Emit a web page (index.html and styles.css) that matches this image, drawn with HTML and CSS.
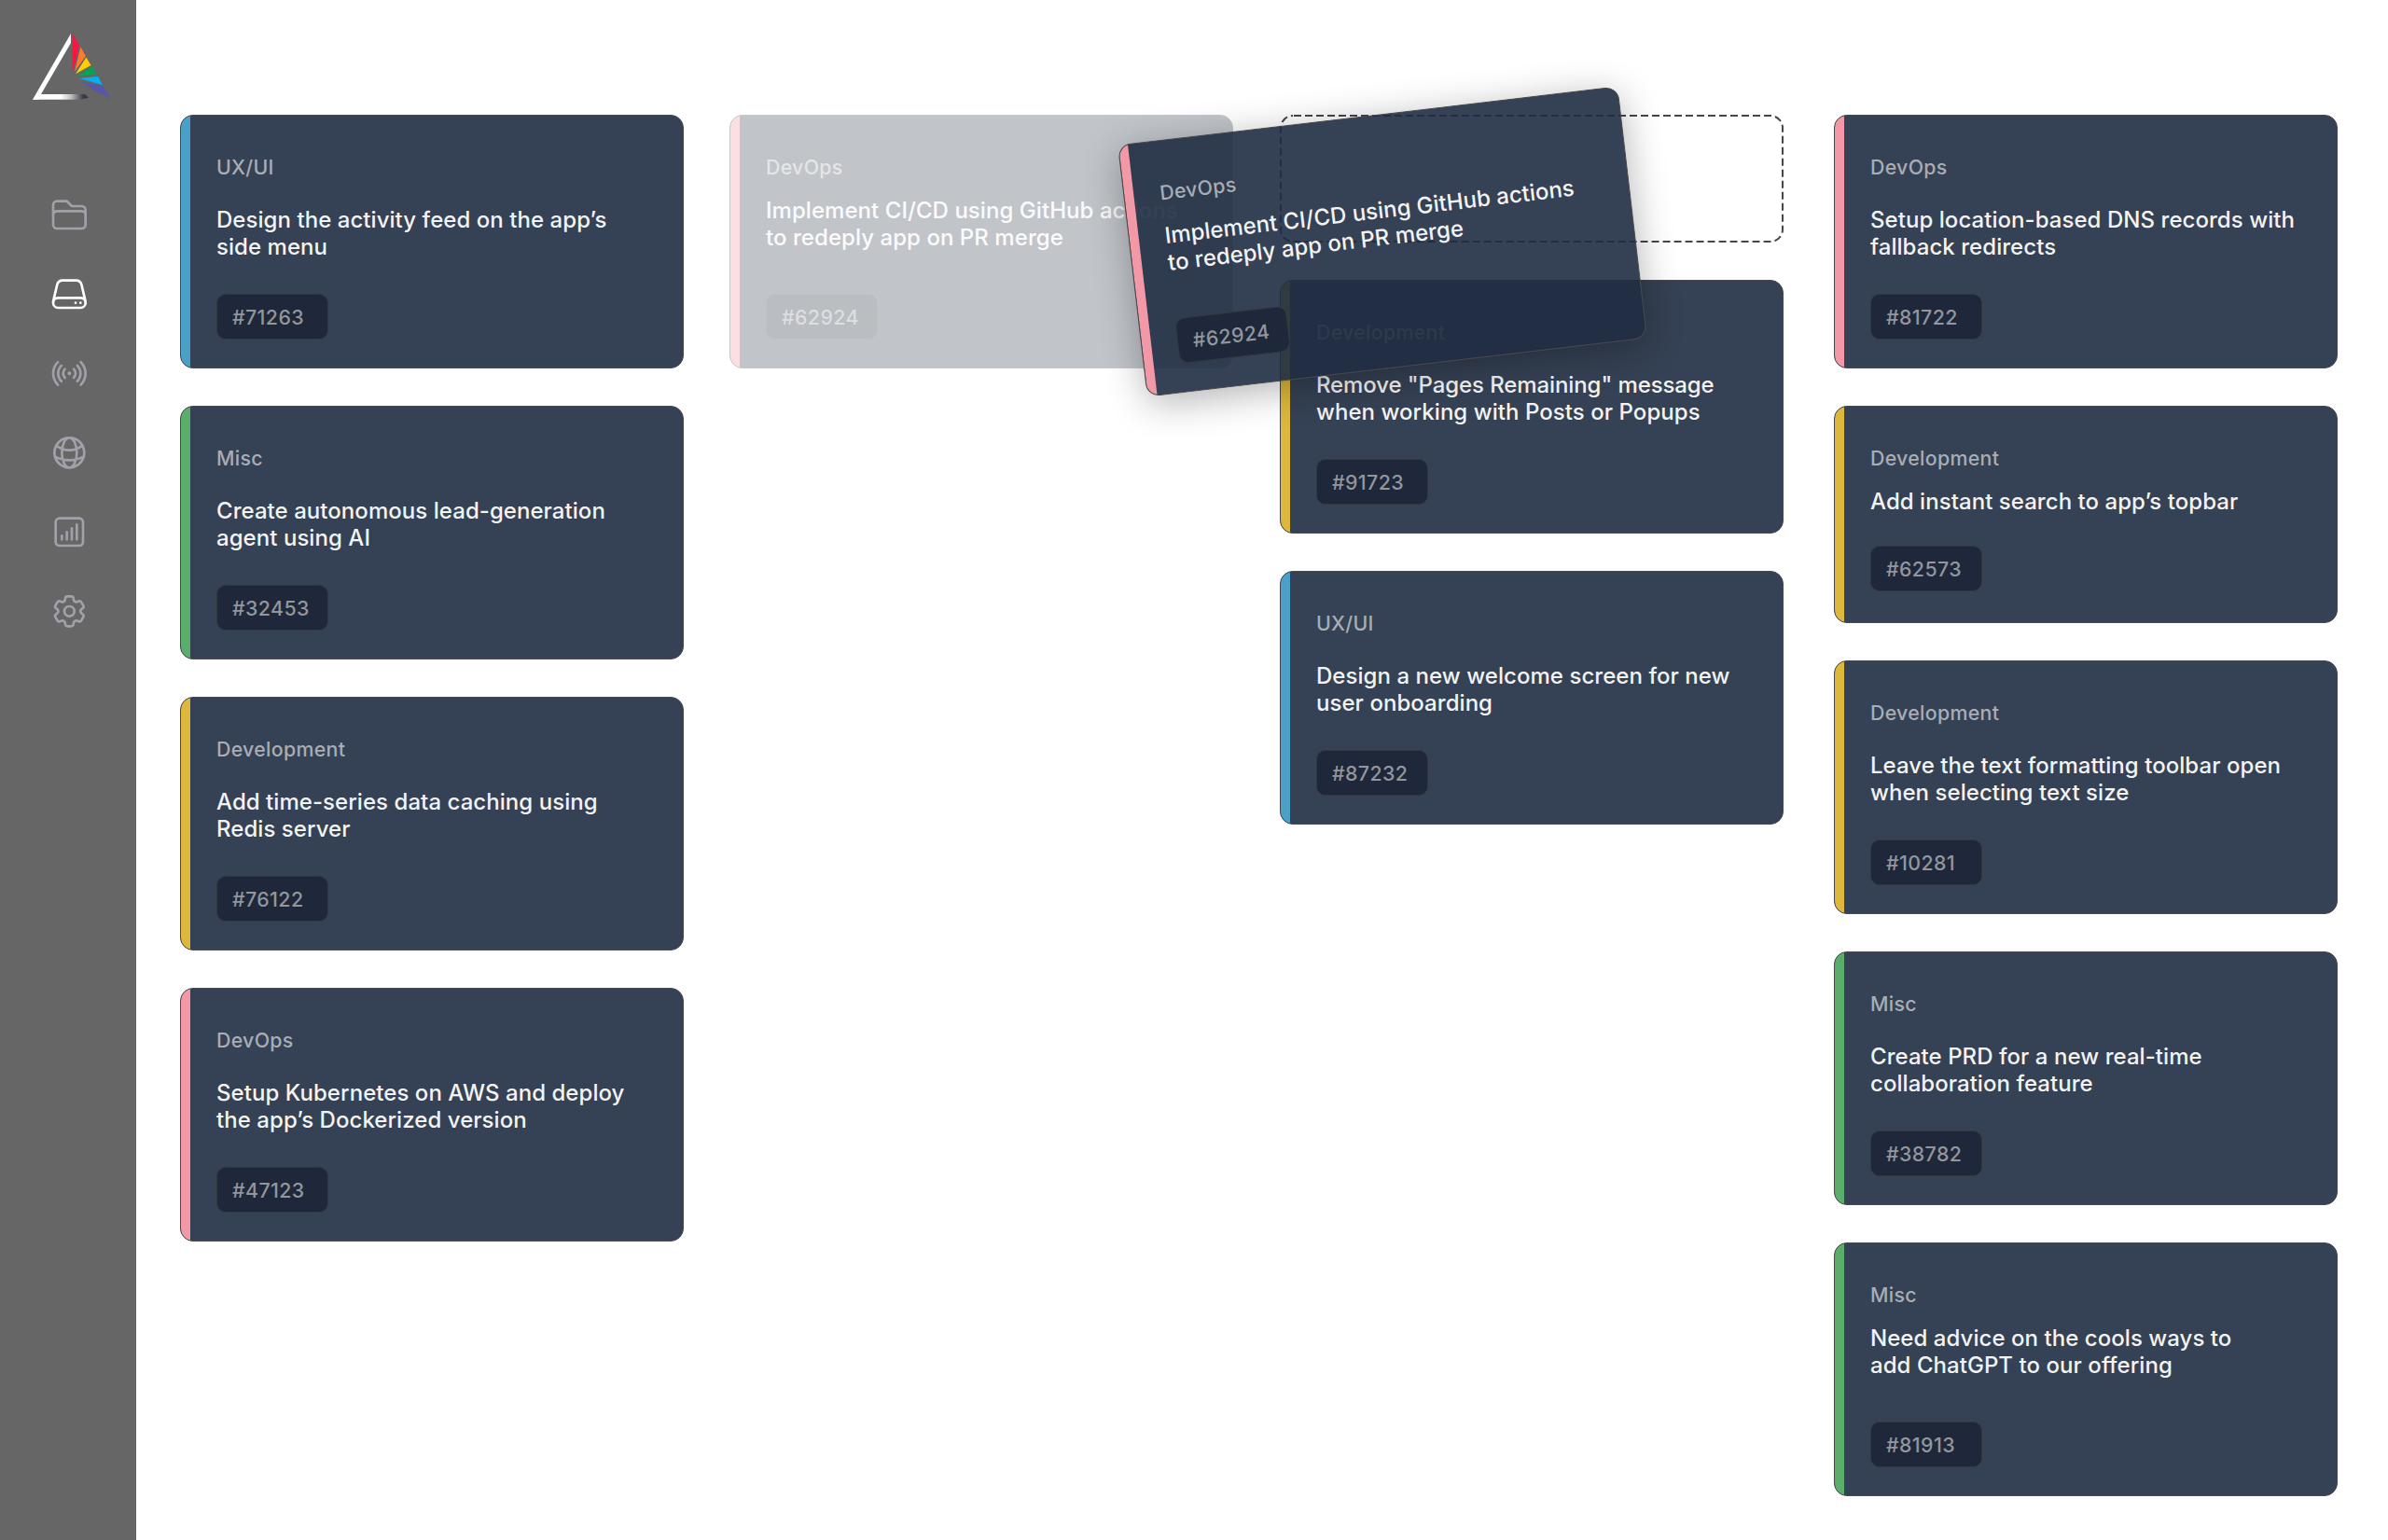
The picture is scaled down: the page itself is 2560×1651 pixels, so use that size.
FILE: index.html
```html
<!DOCTYPE html>
<html lang="en">
<head>
<meta charset="utf-8">
<title>Task board</title>
<link rel="stylesheet" href="styles.css">
</head>
<body>
<div class="app">
  <aside class="sidebar">
    <svg class="logo" viewBox="34 34 88 75" aria-hidden="true">
      <defs>
        <linearGradient id="base" gradientUnits="userSpaceOnUse" x1="35" y1="0" x2="95" y2="0">
          <stop offset="0.5" stop-color="#fff"/>
          <stop offset="0.68" stop-color="#c4c4c8"/>
          <stop offset="0.9" stop-color="#3c3c44"/>
          <stop offset="1" stop-color="#2f3a44"/>
        </linearGradient>
      </defs>
      <path fill="#fff" d="M76 36V46L44 101L41 106.7H35Z"/>
      <path fill="url(#base)" d="M42 101H91L95 104.7L94 105L86 106.7H35Z"/>
      <path fill="#f5173f" d="M77.7 36L85 48.5L79 74.5L77.7 74Z"/>
      <path fill="#ff7a30" d="M86.4 50.3L91.8 60L80 76.7Z"/>
      <path fill="#ffcf00" d="M92.4 61.5L97.5 70L81 79.3Z"/>
      <path fill="#00a651" d="M98.6 71.4L103.8 80L83.3 81Z"/>
      <path fill="#00b3f0" d="M105 82L109.8 91L85 84Z"/>
      <path fill="#5756a8" d="M87 87.6L110.4 92L118.8 106.3L101 97Z"/>
    </svg>
    <nav class="nav">
      <svg class="icon" viewBox="0 0 24 24"><path d="M2.25 12.75V12A2.25 2.25 0 014.5 9.75h15A2.25 2.25 0 0121.75 12v.75m-8.69-6.44l-2.12-2.12a1.5 1.5 0 00-1.061-.44H4.5A2.25 2.25 0 002.25 6v12a2.25 2.25 0 002.25 2.25h15A2.25 2.25 0 0021.75 18V9a2.25 2.25 0 00-2.25-2.25h-5.379a1.5 1.5 0 01-1.06-.44z"/></svg>
      <svg class="icon active" viewBox="0 0 24 24"><path d="M21.75 17.25v-.228a4.5 4.5 0 00-.12-1.03l-2.268-9.64a3.375 3.375 0 00-3.285-2.602H7.923a3.375 3.375 0 00-3.285 2.602l-2.268 9.64a4.5 4.5 0 00-.12 1.03v.228m19.5 0a3 3 0 01-3 3H5.25a3 3 0 01-3-3m19.5 0a3 3 0 00-3-3H5.25a3 3 0 00-3 3m16.5 0h.008v.008h-.008v-.008zm-3 0h.008v.008h-.008v-.008z"/></svg>
      <svg class="icon" viewBox="0 0 24 24"><path d="M9.348 14.651a3.75 3.75 0 010-5.303m5.304 0a3.75 3.75 0 010 5.303m-7.425 2.122a6.75 6.75 0 010-9.546m9.546 0a6.75 6.75 0 010 9.546M5.106 18.894c-3.808-3.808-3.808-9.98 0-13.789m13.788 0c3.808 3.808 3.808 9.981 0 13.79M12 12h.008v.007H12V12zm.375 0a.375.375 0 11-.75 0 .375.375 0 01.75 0z"/></svg>
      <svg class="icon" viewBox="0 0 24 24"><path d="M12 21a9.004 9.004 0 008.716-6.747M12 21a9.004 9.004 0 01-8.716-6.747M12 21c2.485 0 4.5-4.03 4.5-9S14.485 3 12 3m0 18c-2.485 0-4.5-4.03-4.5-9S9.515 3 12 3m0 0a8.997 8.997 0 017.843 4.582M12 3a8.997 8.997 0 00-7.843 4.582m15.686 0A11.953 11.953 0 0112 10.5c-2.998 0-5.74-1.1-7.843-2.918m15.686 0A8.959 8.959 0 0121 12c0 .778-.099 1.533-.284 2.253m0 0A17.919 17.919 0 0112 16.5c-3.162 0-6.133-.815-8.716-2.247m0 0A9.015 9.015 0 013 12c0-1.605.42-3.113 1.157-4.418"/></svg>
      <svg class="icon" viewBox="0 0 24 24"><path d="M7.5 14.25v2.25m3-4.5v4.5m3-6.75v6.75m3-9v9M6 20.25h12A2.25 2.25 0 0020.25 18V6A2.25 2.25 0 0018 3.75H6A2.25 2.25 0 003.75 6v12A2.25 2.25 0 006 20.25z"/></svg>
      <svg class="icon" viewBox="0 0 24 24"><path d="M9.594 3.94c.09-.542.56-.94 1.11-.94h2.593c.55 0 1.02.398 1.11.94l.213 1.281c.063.374.313.686.645.87.074.04.147.083.22.127.324.196.72.257 1.075.124l1.217-.456a1.125 1.125 0 011.37.49l1.296 2.247a1.125 1.125 0 01-.26 1.431l-1.003.827c-.293.24-.438.613-.431.992a6.759 6.759 0 010 .255c-.007.378.138.75.43.99l1.005.828c.424.35.534.954.26 1.43l-1.298 2.247a1.125 1.125 0 01-1.369.491l-1.217-.456c-.355-.133-.75-.072-1.076.124a6.57 6.57 0 01-.22.128c-.331.183-.581.495-.644.869l-.213 1.28c-.09.543-.56.941-1.11.941h-2.594c-.55 0-1.02-.398-1.11-.94l-.213-1.281c-.062-.374-.312-.686-.644-.87a6.52 6.52 0 01-.22-.127c-.325-.196-.72-.257-1.076-.124l-1.217.456a1.125 1.125 0 01-1.369-.49l-1.297-2.247a1.125 1.125 0 01.26-1.431l1.004-.827c.292-.24.437-.613.43-.992a6.932 6.932 0 010-.255c.007-.378-.138-.75-.43-.99l-1.004-.828a1.125 1.125 0 01-.26-1.43l1.297-2.247a1.125 1.125 0 011.37-.491l1.216.456c.356.133.751.072 1.076-.124.072-.044.146-.087.22-.128.332-.183.582-.495.644-.869l.214-1.281z"/><path d="M15 12a3 3 0 11-6 0 3 3 0 016 0z"/></svg>
    </nav>
  </aside>

  <main class="board">
    <section class="column">
      <article class="card blue"><p class="category">UX/UI</p><h2 class="title">Design the activity feed on the app’s<br>side menu</h2><span class="tag">#71263</span></article>
      <article class="card green"><p class="category">Misc</p><h2 class="title">Create autonomous lead-generation<br>agent using AI</h2><span class="tag">#32453</span></article>
      <article class="card yellow"><p class="category">Development</p><h2 class="title">Add time-series data caching using<br>Redis server</h2><span class="tag">#76122</span></article>
      <article class="card pink"><p class="category">DevOps</p><h2 class="title">Setup Kubernetes on AWS and deploy<br>the app’s Dockerized version</h2><span class="tag">#47123</span></article>
    </section>

    <section class="column">
      <article class="card pink tight ghost"><p class="category">DevOps</p><h2 class="title">Implement CI/CD using GitHub actions<br>to redeply app on PR merge</h2><span class="tag">#62924</span></article>
    </section>

    <section class="column">
      <svg class="dropzone" viewBox="0 0 540 137"><rect x="1" y="1" width="538" height="135" rx="13"/></svg>
      <article class="card yellow"><p class="category">Development</p><h2 class="title"><span class="snug">Remove "Pages Remaining" message</span><br>when working with Posts or Popups</h2><span class="tag">#91723</span></article>
      <article class="card blue"><p class="category">UX/UI</p><h2 class="title">Design a new welcome screen for new<br>user onboarding</h2><span class="tag">#87232</span></article>
    </section>

    <section class="column">
      <article class="card pink"><p class="category">DevOps</p><h2 class="title">Setup location-based DNS records with<br>fallback redirects</h2><span class="tag">#81722</span></article>
      <article class="card yellow tight short"><p class="category">Development</p><h2 class="title">Add instant search to app’s topbar</h2><span class="tag">#62573</span></article>
      <article class="card yellow"><p class="category">Development</p><h2 class="title">Leave the text formatting toolbar open<br>when selecting text size</h2><span class="tag">#10281</span></article>
      <article class="card green"><p class="category">Misc</p><h2 class="title">Create PRD for a new real-time<br>collaboration feature</h2><span class="tag">#38782</span></article>
      <article class="card green tight"><p class="category">Misc</p><h2 class="title">Need advice on the cools ways to<br>add ChatGPT to our offering</h2><span class="tag">#81913</span></article>
    </section>

    <article class="card pink tight dragging"><p class="category">DevOps</p><h2 class="title">Implement CI/CD using GitHub actions<br>to redeply app on PR merge</h2><span class="tag">#62924</span></article>
  </main>
</div>
</body>
</html>
```
FILE: styles.css
```css
* { box-sizing: border-box; }

body {
  margin: 0;
  background: #fff;
  font-family: Inter, "Liberation Sans", sans-serif;
}

.app {
  display: flex;
  height: 1651px;
  overflow: hidden;
}

.sidebar {
  flex: none;
  width: 146px;
  padding-top: 34px;
  background: #666;
  display: flex;
  flex-direction: column;
  align-items: center;
}

.logo {
  width: 88px;
  height: 75px;
  margin-left: 10px;
}

.nav {
  margin-top: 99.5px;
  margin-left: 2px;
  display: flex;
  flex-direction: column;
  gap: 42.5px;
}

.icon {
  display: block;
  width: 42.67px;
  height: 42.67px;
  fill: none;
  stroke: #a1a1aa;
  stroke-width: 1.5;
  stroke-linecap: round;
  stroke-linejoin: round;
}

.icon.active { stroke: #fff; }

.board {
  position: relative;
  display: grid;
  grid-template-columns: 589px 590px 594px 540px;
  align-items: start;
  padding: 123px 0 0 47px;
}

.column {
  width: 540px;
  display: flex;
  flex-direction: column;
  gap: 40px;
}

.card {
  --accent: #4aa0c6;
  width: 540px;
  height: 272px;
  padding: 43px 20px 30px 38px;
  display: flex;
  flex-direction: column;
  align-items: flex-start;
  border: 1px solid #48494d;
  border-radius: 14px;
  background:
    linear-gradient(var(--accent), var(--accent)) 0 0 / 10px 100% no-repeat,
    rgba(31, 44, 65, 0.9);
}

.blue { --accent: #4aa0c6; }
.green { --accent: #5bad6c; }
.yellow { --accent: #deb83c; }
.pink { --accent: #f398a6; }

.category {
  margin: 0;
  font-size: 21.33px;
  font-weight: 500;
  line-height: 24px;
  letter-spacing: 0.3px;
  color: #a9adb4;
}

.title {
  margin: 30px 0 0;
  font-size: 24px;
  font-weight: 500;
  line-height: 29.33px;
  letter-spacing: 0.05px;
  color: #f3f3f3;
  white-space: nowrap;
}

.snug { letter-spacing: -0.1px; }

.tight .title { margin-top: 20px; }

.tag {
  margin-top: auto;
  width: 120px;
  height: 49px;
  padding-left: 16px;
  border: 1px solid #33383f;
  border-radius: 10px;
  background: #1e283a;
  font-size: 21.33px;
  font-weight: 500;
  line-height: 48px;
  letter-spacing: 0.4px;
  color: #93969c;
}

.short { height: 233px; padding-bottom: 33px; }

.dropzone {
  display: block;
  width: 540px;
  height: 137px;
}

.dropzone rect {
  fill: none;
  stroke: #42464f;
  stroke-width: 2;
  stroke-dasharray: 8 4;
  stroke-dashoffset: -1;
}

.ghost { opacity: 0.3; }

.dragging {
  position: absolute;
  left: 1066px;
  top: 123px;
  transform: rotate(-6.7deg);
  box-shadow: 0 8px 40px rgba(0, 0, 0, 0.3);
}
```
